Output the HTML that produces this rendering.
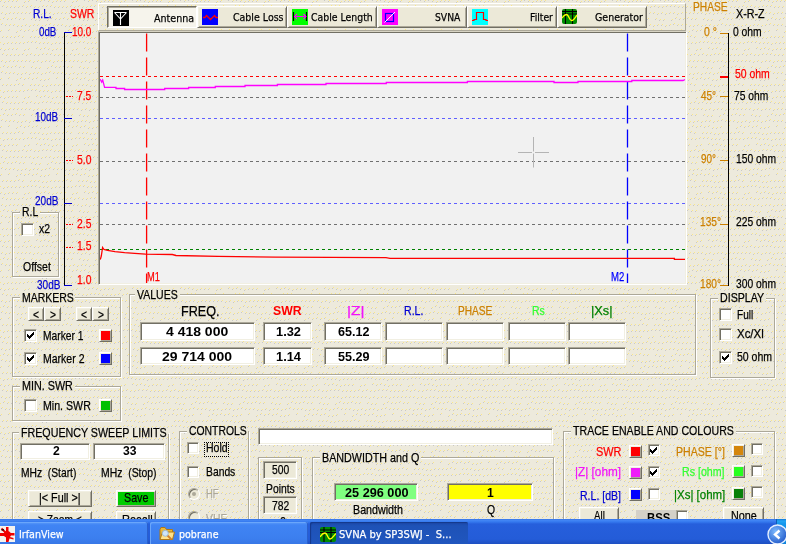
<!DOCTYPE html><html><head><meta charset="utf-8"><title>SVNA by SP3SWJ</title><style>
html,body{margin:0;padding:0}body{width:786px;height:544px;overflow:hidden;position:relative;background:#ECE9D8;font-family:"Liberation Sans",sans-serif}
#r{position:absolute;left:0;top:0;width:786px;height:544px;overflow:hidden;will-change:transform}
#r div,#r svg,#r span{position:absolute}
#r span{white-space:pre;line-height:1;transform-origin:0 0;-webkit-text-stroke:0.25px}
</style></head><body><div id="r">
<svg style="left:0;top:0" width="786" height="544" viewBox="0 0 786 544" shape-rendering="crispEdges"><defs><pattern id="dp" width="48" height="48" patternUnits="userSpaceOnUse"><rect width="48" height="48" fill="#EDEADC"/><path fill="#FBE78A" d="M1 0h1v1h-1zM5 1h1v1h-1zM9 0h1v1h-1zM13 0h1v1h-1zM17 0h1v1h-1zM25 1h1v1h-1zM29 0h1v1h-1zM37 47h1v1h-1zM41 0h1v1h-1zM45 47h1v1h-1zM3 5h1v1h-1zM7 6h1v1h-1zM11 6h1v1h-1zM15 6h1v1h-1zM19 6h1v1h-1zM23 5h1v1h-1zM27 6h1v1h-1zM31 5h1v1h-1zM35 6h1v1h-1zM39 6h1v1h-1zM43 5h1v1h-1zM47 5h1v1h-1zM2 12h1v1h-1zM6 13h1v1h-1zM10 12h1v1h-1zM14 12h1v1h-1zM18 12h1v1h-1zM22 12h1v1h-1zM26 12h1v1h-1zM30 12h1v1h-1zM34 13h1v1h-1zM38 12h1v1h-1zM42 13h1v1h-1zM46 12h1v1h-1zM4 17h1v1h-1zM8 18h1v1h-1zM12 18h1v1h-1zM16 17h1v1h-1zM20 18h1v1h-1zM24 18h1v1h-1zM32 18h1v1h-1zM36 19h1v1h-1zM40 19h1v1h-1zM0 19h1v1h-1zM2 23h1v1h-1zM6 24h1v1h-1zM10 24h1v1h-1zM14 24h1v1h-1zM18 25h1v1h-1zM22 25h1v1h-1zM26 24h1v1h-1zM30 25h1v1h-1zM34 24h1v1h-1zM38 24h1v1h-1zM42 25h1v1h-1zM46 24h1v1h-1zM1 30h1v1h-1zM9 29h1v1h-1zM17 31h1v1h-1zM21 29h1v1h-1zM25 30h1v1h-1zM29 29h1v1h-1zM33 30h1v1h-1zM37 29h1v1h-1zM41 31h1v1h-1zM45 31h1v1h-1zM3 36h1v1h-1zM7 36h1v1h-1zM11 36h1v1h-1zM15 36h1v1h-1zM19 35h1v1h-1zM23 36h1v1h-1zM31 36h1v1h-1zM35 36h1v1h-1zM39 36h1v1h-1zM43 37h1v1h-1zM47 37h1v1h-1zM4 43h1v1h-1zM8 42h1v1h-1zM12 42h1v1h-1zM16 42h1v1h-1zM20 42h1v1h-1zM24 42h1v1h-1zM28 41h1v1h-1zM32 41h1v1h-1zM36 41h1v1h-1zM40 42h1v1h-1zM44 42h1v1h-1zM0 42h1v1h-1z"/><path fill="#C9C8C8" d="M0 1h1v1h-1zM4 2h1v1h-1zM8 1h1v1h-1zM12 1h1v1h-1zM16 1h1v1h-1zM24 2h1v1h-1zM28 1h1v1h-1zM36 0h1v1h-1zM40 1h1v1h-1zM44 0h1v1h-1zM2 6h1v1h-1zM6 7h1v1h-1zM10 7h1v1h-1zM14 7h1v1h-1zM18 7h1v1h-1zM22 6h1v1h-1zM26 7h1v1h-1zM30 6h1v1h-1zM34 7h1v1h-1zM38 7h1v1h-1zM42 6h1v1h-1zM46 6h1v1h-1zM1 13h1v1h-1zM5 14h1v1h-1zM9 13h1v1h-1zM13 13h1v1h-1zM17 13h1v1h-1zM21 13h1v1h-1zM25 13h1v1h-1zM29 13h1v1h-1zM33 14h1v1h-1zM37 13h1v1h-1zM41 14h1v1h-1zM45 13h1v1h-1zM3 18h1v1h-1zM7 19h1v1h-1zM11 19h1v1h-1zM15 18h1v1h-1zM19 19h1v1h-1zM23 19h1v1h-1zM31 19h1v1h-1zM35 20h1v1h-1zM39 20h1v1h-1zM47 20h1v1h-1zM1 24h1v1h-1zM5 25h1v1h-1zM9 25h1v1h-1zM13 25h1v1h-1zM17 26h1v1h-1zM21 26h1v1h-1zM25 25h1v1h-1zM29 26h1v1h-1zM33 25h1v1h-1zM37 25h1v1h-1zM41 26h1v1h-1zM45 25h1v1h-1zM0 31h1v1h-1zM8 30h1v1h-1zM16 32h1v1h-1zM20 30h1v1h-1zM24 31h1v1h-1zM28 30h1v1h-1zM32 31h1v1h-1zM36 30h1v1h-1zM40 32h1v1h-1zM44 32h1v1h-1zM2 37h1v1h-1zM6 37h1v1h-1zM10 37h1v1h-1zM14 37h1v1h-1zM18 36h1v1h-1zM22 37h1v1h-1zM30 37h1v1h-1zM34 37h1v1h-1zM38 37h1v1h-1zM42 38h1v1h-1zM46 38h1v1h-1zM3 44h1v1h-1zM7 43h1v1h-1zM11 43h1v1h-1zM15 43h1v1h-1zM19 43h1v1h-1zM23 43h1v1h-1zM27 42h1v1h-1zM31 42h1v1h-1zM35 42h1v1h-1zM39 43h1v1h-1zM43 43h1v1h-1zM47 43h1v1h-1z"/></pattern></defs><rect width="786" height="544" fill="url(#dp)"/></svg>
<div style="left:98px;top:3px;width:588px;height:28px;box-sizing:border-box;border:1px solid;border-color:#FFFFFF #ACA899 #ACA899 #FFFFFF"></div>
<div style="left:107px;top:6px;width:90px;height:22px;box-sizing:border-box;background:#F6F4EC;border:1px solid;border-color:#716F64 #FFFFFF #FFFFFF #716F64;box-shadow:inset 1px 1px 0 #ACA899"></div>
<div style="left:197px;top:6px;width:90px;height:22px;box-sizing:border-box;background:#ECE9D8;border:1px solid;border-color:#FFFFFF #716F64 #716F64 #FFFFFF;box-shadow:inset 1px 1px 0 #F1EFE2,inset -1px -1px 0 #ACA899"></div>
<div style="left:287px;top:6px;width:90px;height:22px;box-sizing:border-box;background:#ECE9D8;border:1px solid;border-color:#FFFFFF #716F64 #716F64 #FFFFFF;box-shadow:inset 1px 1px 0 #F1EFE2,inset -1px -1px 0 #ACA899"></div>
<div style="left:377px;top:6px;width:90px;height:22px;box-sizing:border-box;background:#ECE9D8;border:1px solid;border-color:#FFFFFF #716F64 #716F64 #FFFFFF;box-shadow:inset 1px 1px 0 #F1EFE2,inset -1px -1px 0 #ACA899"></div>
<div style="left:467px;top:6px;width:90px;height:22px;box-sizing:border-box;background:#ECE9D8;border:1px solid;border-color:#FFFFFF #716F64 #716F64 #FFFFFF;box-shadow:inset 1px 1px 0 #F1EFE2,inset -1px -1px 0 #ACA899"></div>
<div style="left:557px;top:6px;width:90px;height:22px;box-sizing:border-box;background:#ECE9D8;border:1px solid;border-color:#FFFFFF #716F64 #716F64 #FFFFFF;box-shadow:inset 1px 1px 0 #F1EFE2,inset -1px -1px 0 #ACA899"></div>
<svg style="left:113px;top:10px" width="16" height="16" viewBox="0 0 16 16" ><rect width="16" height="16" fill="#000"/><path d="M1.5 2.5H13.5M7.5 2.5V15M1.5 2.5L7.5 9L13.5 2.5" stroke="#fff" stroke-width="1.1" fill="none"/></svg>
<svg style="left:202px;top:9px" width="16" height="16" viewBox="0 0 16 16" ><rect width="16" height="16" fill="#0000FF"/><path d="M1 8.5H3L4.5 6.5L8.5 10.5L12.5 6.5L14 8.5H16" stroke="#FF0000" stroke-width="1.3" fill="none"/></svg>
<svg style="left:292px;top:9px" width="16" height="16" viewBox="0 0 16 16" ><rect width="16" height="16" fill="#00FF00"/><path d="M1.5 3V12M14.5 3V12" stroke="#000" stroke-width="1.2"/><path d="M2.5 7.5H14M5 5L2.5 7.5L5 10M11.5 5L14 7.5L11.5 10" stroke="#FF00FF" stroke-width="1.1" fill="none"/></svg>
<svg style="left:382px;top:9px" width="16" height="16" viewBox="0 0 16 16" ><rect width="16" height="16" fill="#FF00FF"/><rect x="3.5" y="4.5" width="8" height="8" fill="none" stroke="#0000FF" stroke-width="1.2"/><path d="M2.5 13.5L13 3" stroke="#fff" stroke-width="1"/></svg>
<svg style="left:472px;top:9px" width="16" height="16" viewBox="0 0 16 16" ><rect width="16" height="16" fill="#00FFFF"/><path d="M0 11.5H2V10.5H4.5V3.5H11.5V10.5H14V11.5H16" stroke="#FF0000" stroke-width="1.2" fill="none"/></svg>
<svg style="left:562px;top:9px" width="16" height="16" viewBox="0 0 16 16" ><rect width="15" height="15" rx="2" fill="#008C00"/><path d="M3.5 0V15M10.5 0V15M0 2.5H15M0 5H15" stroke="#000" stroke-width="1.1"/><path d="M0 9C1.5 7 2.5 5.5 4.5 5.5C7 5.5 7 11.5 9.5 11.5C12 11.5 13.5 8 15 6" stroke="#FFFF00" stroke-width="1.3" fill="none"/></svg>
<div style="left:98px;top:31px;width:589px;height:254px;box-sizing:border-box;background:#F1F1F1;border:1px solid;border-color:#D8D4C4 #FFFFFF #FFFFFF #ACA899;box-shadow:inset 1px 1px 0 #716F64,inset -1px -1px 0 #F1EFE2"></div>
<svg style="left:100px;top:33px" width="585" height="250" viewBox="0 0 585 250" ><line x1="0" y1="43.5" x2="585" y2="43.5" stroke="#FF0000" stroke-width="1" stroke-dasharray="3 3"/><line x1="0" y1="64.5" x2="585" y2="64.5" stroke="#707070" stroke-width="1" stroke-dasharray="3 3"/><line x1="0" y1="85.5" x2="585" y2="85.5" stroke="#6060FF" stroke-width="1" stroke-dasharray="3 3"/><line x1="0" y1="128.5" x2="585" y2="128.5" stroke="#707070" stroke-width="1" stroke-dasharray="3 3"/><line x1="0" y1="170.5" x2="585" y2="170.5" stroke="#6060FF" stroke-width="1" stroke-dasharray="3 3"/><line x1="0" y1="191.5" x2="585" y2="191.5" stroke="#707070" stroke-width="1" stroke-dasharray="3 3"/><line x1="0" y1="216.5" x2="585" y2="216.5" stroke="#008000" stroke-width="1" stroke-dasharray="3 3"/><line x1="46.599999999999994" y1="0.5" x2="46.599999999999994" y2="250" stroke="#FF0000" stroke-width="1.3" stroke-dasharray="18 6"/><line x1="527.5" y1="0.5" x2="527.5" y2="250" stroke="#0000FF" stroke-width="1.3" stroke-dasharray="18 6"/><polyline fill="none" stroke="#FF00FF" stroke-width="1.3" points="0.0,46.0 1.7,49.0 2.7,47.0 4.6,54.3 16.0,54.3 16.0,55.5 24.6,55.5 24.6,56.5 64.7,56.5 64.7,55.5 88.6,55.5 88.6,54.5 115.3,54.5 115.3,53.5 145.0,53.5 145.0,52.5 177.4,52.5 177.4,51.5 226.0,51.5 226.0,50.5 286.3,50.5 286.3,49.5 367.4,49.5 367.4,48.5 454.0,48.5 454.0,49.5 478.0,49.5 478.0,48.5 531.8,48.5 531.8,47.5 583.0,47.5 585.0,46.5"/><polyline fill="none" stroke="#FF0000" stroke-width="1.3" points="0.3,226.5 1.3,223.0 2.6,214.5 4.0,216.5 7.5,217.3 15.0,218.6 24.6,219.6 34.6,220.4 45.6,221.1 72.3,221.5 76.0,222.5 118.0,223.4 175.4,224.2 286.0,224.6 290.0,225.3 574.4,225.3 574.4,226.3 585.0,226.3"/><path d="M433.5 104V118.5M433.5 120.5V134.5M418 119.5H432M435 119.5H449" stroke="#B4B4B4" stroke-width="1"/></svg>
<div style="left:64px;top:32px;width:1.35px;height:254px;background:#000"></div>
<div style="left:64px;top:32px;width:8px;height:1.4px;background:#0000D0"></div>
<div style="left:64px;top:118px;width:8px;height:1.4px;background:#0000D0"></div>
<div style="left:64px;top:203px;width:8px;height:1.4px;background:#0000D0"></div>
<div style="left:64px;top:285px;width:8px;height:1.4px;background:#0000D0"></div>
<div style="left:65.5px;top:96.0px;width:7.5px;height:1px;background:repeating-linear-gradient(90deg,#FF0000 0 2px,transparent 2px 3px)"></div>
<div style="left:65.5px;top:160.0px;width:7.5px;height:1px;background:repeating-linear-gradient(90deg,#FF0000 0 2px,transparent 2px 3px)"></div>
<div style="left:65.5px;top:223.5px;width:7.5px;height:1px;background:repeating-linear-gradient(90deg,#FF0000 0 2px,transparent 2px 3px)"></div>
<div style="left:65.5px;top:247.0px;width:7.5px;height:1px;background:repeating-linear-gradient(90deg,#FF0000 0 2px,transparent 2px 3px)"></div>
<div style="left:728px;top:33px;width:1.35px;height:253px;background:#000"></div>
<div style="left:720px;top:33px;width:8px;height:1.4px;background:#CC8000"></div>
<div style="left:720px;top:96px;width:8px;height:1.4px;background:#CC8000"></div>
<div style="left:720px;top:160px;width:8px;height:1.4px;background:#CC8000"></div>
<div style="left:720px;top:223.5px;width:8px;height:1.4px;background:#CC8000"></div>
<div style="left:720px;top:285px;width:8px;height:1.4px;background:#CC8000"></div>
<div style="left:720px;top:76.3px;width:8px;height:1.4px;background:#FF0000"></div>
<div style="left:13px;top:213px;width:47px;height:65px;border:1px solid #FFFFFF;box-sizing:border-box"></div>
<div style="left:12px;top:212px;width:47px;height:65px;border:1px solid #ACA899;box-sizing:border-box"></div>
<div style="left:19.5px;top:212px;width:20.200000000000003px;height:2px;background:#ECE9D8"></div>
<div style="left:21px;top:223px;width:13px;height:13px;box-sizing:border-box;background:#fff;border:1px solid;border-color:#ACA899 #FFFFFF #FFFFFF #ACA899;box-shadow:inset 1px 1px 0 #716F64,inset -1px -1px 0 #F1EFE2"></div>
<div style="left:13px;top:298px;width:109px;height:80px;border:1px solid #FFFFFF;box-sizing:border-box"></div>
<div style="left:12px;top:297px;width:109px;height:80px;border:1px solid #ACA899;box-sizing:border-box"></div>
<div style="left:19.7px;top:297px;width:55.8px;height:2px;background:#ECE9D8"></div>
<div style="left:28px;top:307px;width:16px;height:14px;box-sizing:border-box;background:#ECE9D8;border:1px solid;border-color:#FFFFFF #716F64 #716F64 #FFFFFF;box-shadow:inset 1px 1px 0 #F1EFE2,inset -1px -1px 0 #ACA899"></div>
<div style="left:44px;top:307px;width:17px;height:14px;box-sizing:border-box;background:#ECE9D8;border:1px solid;border-color:#FFFFFF #716F64 #716F64 #FFFFFF;box-shadow:inset 1px 1px 0 #F1EFE2,inset -1px -1px 0 #ACA899"></div>
<div style="left:76px;top:307px;width:16px;height:14px;box-sizing:border-box;background:#ECE9D8;border:1px solid;border-color:#FFFFFF #716F64 #716F64 #FFFFFF;box-shadow:inset 1px 1px 0 #F1EFE2,inset -1px -1px 0 #ACA899"></div>
<div style="left:92px;top:307px;width:17px;height:14px;box-sizing:border-box;background:#ECE9D8;border:1px solid;border-color:#FFFFFF #716F64 #716F64 #FFFFFF;box-shadow:inset 1px 1px 0 #F1EFE2,inset -1px -1px 0 #ACA899"></div>
<div style="left:24px;top:329px;width:13px;height:13px;box-sizing:border-box;background:#fff;border:1px solid;border-color:#ACA899 #FFFFFF #FFFFFF #ACA899;box-shadow:inset 1px 1px 0 #716F64,inset -1px -1px 0 #F1EFE2"></div>
<svg style="left:27px;top:332px" width="7" height="7" viewBox="0 0 7 7" shape-rendering="crispEdges"><rect x="0" y="2" width="1" height="3"/><rect x="1" y="3" width="1" height="3"/><rect x="2" y="4" width="1" height="3"/><rect x="3" y="3" width="1" height="3"/><rect x="4" y="2" width="1" height="3"/><rect x="5" y="1" width="1" height="3"/><rect x="6" y="0" width="1" height="3"/></svg>
<div style="left:24px;top:352px;width:13px;height:13px;box-sizing:border-box;background:#fff;border:1px solid;border-color:#ACA899 #FFFFFF #FFFFFF #ACA899;box-shadow:inset 1px 1px 0 #716F64,inset -1px -1px 0 #F1EFE2"></div>
<svg style="left:27px;top:355px" width="7" height="7" viewBox="0 0 7 7" shape-rendering="crispEdges"><rect x="0" y="2" width="1" height="3"/><rect x="1" y="3" width="1" height="3"/><rect x="2" y="4" width="1" height="3"/><rect x="3" y="3" width="1" height="3"/><rect x="4" y="2" width="1" height="3"/><rect x="5" y="1" width="1" height="3"/><rect x="6" y="0" width="1" height="3"/></svg>
<div style="left:99px;top:329px;width:13px;height:13px;box-sizing:border-box;background:#ECE9D8;border:1px solid;border-color:#FFFFFF #716F64 #716F64 #FFFFFF;box-shadow:inset 1px 1px 0 #F1EFE2,inset -1px -1px 0 #ACA899"></div>
<div style="left:101px;top:331px;width:9px;height:9px;background:#FF0000"></div>
<div style="left:99px;top:352px;width:13px;height:13px;box-sizing:border-box;background:#ECE9D8;border:1px solid;border-color:#FFFFFF #716F64 #716F64 #FFFFFF;box-shadow:inset 1px 1px 0 #F1EFE2,inset -1px -1px 0 #ACA899"></div>
<div style="left:101px;top:354px;width:9px;height:9px;background:#0000FF"></div>
<div style="left:130px;top:295px;width:567px;height:81px;border:1px solid #FFFFFF;box-sizing:border-box"></div>
<div style="left:129px;top:294px;width:567px;height:81px;border:1px solid #ACA899;box-sizing:border-box"></div>
<div style="left:135.3px;top:294px;width:44.69999999999999px;height:2px;background:#ECE9D8"></div>
<div style="left:140px;top:322px;width:115px;height:19px;box-sizing:border-box;background:#fff;border:1px solid;border-color:#ACA899 #FFFFFF #FFFFFF #ACA899;box-shadow:inset 1px 1px 0 #716F64,inset -1px -1px 0 #F1EFE2"></div>
<div style="left:140px;top:347px;width:115px;height:18px;box-sizing:border-box;background:#fff;border:1px solid;border-color:#ACA899 #FFFFFF #FFFFFF #ACA899;box-shadow:inset 1px 1px 0 #716F64,inset -1px -1px 0 #F1EFE2"></div>
<div style="left:263px;top:322px;width:49px;height:19px;box-sizing:border-box;background:#fff;border:1px solid;border-color:#ACA899 #FFFFFF #FFFFFF #ACA899;box-shadow:inset 1px 1px 0 #716F64,inset -1px -1px 0 #F1EFE2"></div>
<div style="left:263px;top:347px;width:49px;height:18px;box-sizing:border-box;background:#fff;border:1px solid;border-color:#ACA899 #FFFFFF #FFFFFF #ACA899;box-shadow:inset 1px 1px 0 #716F64,inset -1px -1px 0 #F1EFE2"></div>
<div style="left:324px;top:322px;width:58px;height:19px;box-sizing:border-box;background:#fff;border:1px solid;border-color:#ACA899 #FFFFFF #FFFFFF #ACA899;box-shadow:inset 1px 1px 0 #716F64,inset -1px -1px 0 #F1EFE2"></div>
<div style="left:324px;top:347px;width:58px;height:18px;box-sizing:border-box;background:#fff;border:1px solid;border-color:#ACA899 #FFFFFF #FFFFFF #ACA899;box-shadow:inset 1px 1px 0 #716F64,inset -1px -1px 0 #F1EFE2"></div>
<div style="left:385px;top:322px;width:58px;height:19px;box-sizing:border-box;background:#fff;border:1px solid;border-color:#ACA899 #FFFFFF #FFFFFF #ACA899;box-shadow:inset 1px 1px 0 #716F64,inset -1px -1px 0 #F1EFE2"></div>
<div style="left:385px;top:347px;width:58px;height:18px;box-sizing:border-box;background:#fff;border:1px solid;border-color:#ACA899 #FFFFFF #FFFFFF #ACA899;box-shadow:inset 1px 1px 0 #716F64,inset -1px -1px 0 #F1EFE2"></div>
<div style="left:446px;top:322px;width:58px;height:19px;box-sizing:border-box;background:#fff;border:1px solid;border-color:#ACA899 #FFFFFF #FFFFFF #ACA899;box-shadow:inset 1px 1px 0 #716F64,inset -1px -1px 0 #F1EFE2"></div>
<div style="left:446px;top:347px;width:58px;height:18px;box-sizing:border-box;background:#fff;border:1px solid;border-color:#ACA899 #FFFFFF #FFFFFF #ACA899;box-shadow:inset 1px 1px 0 #716F64,inset -1px -1px 0 #F1EFE2"></div>
<div style="left:508px;top:322px;width:58px;height:19px;box-sizing:border-box;background:#fff;border:1px solid;border-color:#ACA899 #FFFFFF #FFFFFF #ACA899;box-shadow:inset 1px 1px 0 #716F64,inset -1px -1px 0 #F1EFE2"></div>
<div style="left:508px;top:347px;width:58px;height:18px;box-sizing:border-box;background:#fff;border:1px solid;border-color:#ACA899 #FFFFFF #FFFFFF #ACA899;box-shadow:inset 1px 1px 0 #716F64,inset -1px -1px 0 #F1EFE2"></div>
<div style="left:568px;top:322px;width:58px;height:19px;box-sizing:border-box;background:#fff;border:1px solid;border-color:#ACA899 #FFFFFF #FFFFFF #ACA899;box-shadow:inset 1px 1px 0 #716F64,inset -1px -1px 0 #F1EFE2"></div>
<div style="left:568px;top:347px;width:58px;height:18px;box-sizing:border-box;background:#fff;border:1px solid;border-color:#ACA899 #FFFFFF #FFFFFF #ACA899;box-shadow:inset 1px 1px 0 #716F64,inset -1px -1px 0 #F1EFE2"></div>
<div style="left:711px;top:299px;width:65px;height:80px;border:1px solid #FFFFFF;box-sizing:border-box"></div>
<div style="left:710px;top:298px;width:65px;height:80px;border:1px solid #ACA899;box-sizing:border-box"></div>
<div style="left:717.5px;top:298px;width:48.10000000000002px;height:2px;background:#ECE9D8"></div>
<div style="left:719px;top:308px;width:13px;height:13px;box-sizing:border-box;background:#fff;border:1px solid;border-color:#ACA899 #FFFFFF #FFFFFF #ACA899;box-shadow:inset 1px 1px 0 #716F64,inset -1px -1px 0 #F1EFE2"></div>
<div style="left:719px;top:328px;width:13px;height:13px;box-sizing:border-box;background:#fff;border:1px solid;border-color:#ACA899 #FFFFFF #FFFFFF #ACA899;box-shadow:inset 1px 1px 0 #716F64,inset -1px -1px 0 #F1EFE2"></div>
<div style="left:719px;top:351px;width:13px;height:13px;box-sizing:border-box;background:#fff;border:1px solid;border-color:#ACA899 #FFFFFF #FFFFFF #ACA899;box-shadow:inset 1px 1px 0 #716F64,inset -1px -1px 0 #F1EFE2"></div>
<svg style="left:722px;top:354px" width="7" height="7" viewBox="0 0 7 7" shape-rendering="crispEdges"><rect x="0" y="2" width="1" height="3"/><rect x="1" y="3" width="1" height="3"/><rect x="2" y="4" width="1" height="3"/><rect x="3" y="3" width="1" height="3"/><rect x="4" y="2" width="1" height="3"/><rect x="5" y="1" width="1" height="3"/><rect x="6" y="0" width="1" height="3"/></svg>
<div style="left:13px;top:387px;width:109px;height:35px;border:1px solid #FFFFFF;box-sizing:border-box"></div>
<div style="left:12px;top:386px;width:109px;height:35px;border:1px solid #ACA899;box-sizing:border-box"></div>
<div style="left:19.7px;top:386px;width:54.89999999999999px;height:2px;background:#ECE9D8"></div>
<div style="left:24px;top:399px;width:13px;height:13px;box-sizing:border-box;background:#fff;border:1px solid;border-color:#ACA899 #FFFFFF #FFFFFF #ACA899;box-shadow:inset 1px 1px 0 #716F64,inset -1px -1px 0 #F1EFE2"></div>
<div style="left:99px;top:399px;width:13px;height:13px;box-sizing:border-box;background:#ECE9D8;border:1px solid;border-color:#FFFFFF #716F64 #716F64 #FFFFFF;box-shadow:inset 1px 1px 0 #F1EFE2,inset -1px -1px 0 #ACA899"></div>
<div style="left:101px;top:401px;width:9px;height:9px;background:#00C000"></div>
<div style="left:13px;top:433px;width:157px;height:128px;border:1px solid #FFFFFF;box-sizing:border-box"></div>
<div style="left:12px;top:432px;width:157px;height:128px;border:1px solid #ACA899;box-sizing:border-box"></div>
<div style="left:19px;top:432px;width:149.7px;height:2px;background:#ECE9D8"></div>
<div style="left:20px;top:443px;width:70px;height:17px;box-sizing:border-box;background:#fff;border:1px solid;border-color:#ACA899 #FFFFFF #FFFFFF #ACA899;box-shadow:inset 1px 1px 0 #716F64,inset -1px -1px 0 #F1EFE2"></div>
<div style="left:93px;top:443px;width:72px;height:17px;box-sizing:border-box;background:#fff;border:1px solid;border-color:#ACA899 #FFFFFF #FFFFFF #ACA899;box-shadow:inset 1px 1px 0 #716F64,inset -1px -1px 0 #F1EFE2"></div>
<div style="left:28px;top:490px;width:64px;height:17px;box-sizing:border-box;background:#ECE9D8;border:1px solid;border-color:#FFFFFF #716F64 #716F64 #FFFFFF;box-shadow:inset 1px 1px 0 #F1EFE2,inset -1px -1px 0 #ACA899"></div>
<div style="left:116px;top:490px;width:40px;height:17px;box-sizing:border-box;background:#00CC00;border:1px solid;border-color:#FFFFFF #716F64 #716F64 #FFFFFF;box-shadow:inset 1px 1px 0 #F1EFE2,inset -1px -1px 0 #ACA899"></div>
<div style="left:28px;top:511px;width:64px;height:17px;box-sizing:border-box;background:#ECE9D8;border:1px solid;border-color:#FFFFFF #716F64 #716F64 #FFFFFF;box-shadow:inset 1px 1px 0 #F1EFE2,inset -1px -1px 0 #ACA899"></div>
<div style="left:116px;top:511px;width:40px;height:17px;box-sizing:border-box;background:#ECE9D8;border:1px solid;border-color:#FFFFFF #716F64 #716F64 #FFFFFF;box-shadow:inset 1px 1px 0 #F1EFE2,inset -1px -1px 0 #ACA899"></div>
<div style="left:180px;top:432px;width:70px;height:129px;border:1px solid #FFFFFF;box-sizing:border-box"></div>
<div style="left:179px;top:431px;width:70px;height:129px;border:1px solid #ACA899;box-sizing:border-box"></div>
<div style="left:186.6px;top:431px;width:61.70000000000002px;height:2px;background:#ECE9D8"></div>
<div style="left:187px;top:442px;width:12px;height:12px;box-sizing:border-box;background:#fff;border:1px solid;border-color:#ACA899 #FFFFFF #FFFFFF #ACA899;box-shadow:inset 1px 1px 0 #716F64,inset -1px -1px 0 #F1EFE2"></div>
<div style="left:187px;top:466px;width:12px;height:12px;box-sizing:border-box;background:#fff;border:1px solid;border-color:#ACA899 #FFFFFF #FFFFFF #ACA899;box-shadow:inset 1px 1px 0 #716F64,inset -1px -1px 0 #F1EFE2"></div>
<div style="left:203.5px;top:441.5px;width:25px;height:15.5px;box-sizing:border-box;border:1px dotted #000"></div>
<div style="left:187.5px;top:488.2px;width:12px;height:12px;box-sizing:border-box;border-radius:50%;background:#ECE9D8;border:1px solid;border-color:#ACA899 #FFFFFF #FFFFFF #ACA899;box-shadow:inset 1px 1px 0 #716F64"></div>
<div style="left:187.5px;top:511px;width:12px;height:12px;box-sizing:border-box;border-radius:50%;background:#ECE9D8;border:1px solid;border-color:#ACA899 #FFFFFF #FFFFFF #ACA899;box-shadow:inset 1px 1px 0 #716F64"></div>
<div style="left:191.5px;top:492.2px;width:4px;height:4px;border-radius:50%;background:#ACA899"></div>
<div style="left:258px;top:428px;width:295px;height:17px;box-sizing:border-box;background:#fff;border:1px solid;border-color:#ACA899 #FFFFFF #FFFFFF #ACA899;box-shadow:inset 1px 1px 0 #716F64,inset -1px -1px 0 #F1EFE2"></div>
<div style="left:259px;top:458px;width:44px;height:103px;border:1px solid #FFFFFF;box-sizing:border-box"></div>
<div style="left:258px;top:457px;width:44px;height:103px;border:1px solid #ACA899;box-sizing:border-box"></div>
<div style="left:263px;top:461px;width:34px;height:18px;box-sizing:border-box;background:#ECE9D8;border:1px solid;border-color:#ACA899 #FFFFFF #FFFFFF #ACA899;box-shadow:inset 1px 1px 0 #716F64,inset -1px -1px 0 #F1EFE2"></div>
<div style="left:263px;top:496px;width:34px;height:18px;box-sizing:border-box;background:#ECE9D8;border:1px solid;border-color:#ACA899 #FFFFFF #FFFFFF #ACA899;box-shadow:inset 1px 1px 0 #716F64,inset -1px -1px 0 #F1EFE2"></div>
<div style="left:313px;top:458px;width:242px;height:103px;border:1px solid #FFFFFF;box-sizing:border-box"></div>
<div style="left:312px;top:457px;width:242px;height:103px;border:1px solid #ACA899;box-sizing:border-box"></div>
<div style="left:320px;top:457px;width:101.30000000000001px;height:2px;background:#ECE9D8"></div>
<div style="left:334px;top:483px;width:84px;height:18px;box-sizing:border-box;background:#80FF80;border:1px solid;border-color:#ACA899 #FFFFFF #FFFFFF #ACA899;box-shadow:inset 1px 1px 0 #716F64,inset -1px -1px 0 #F1EFE2"></div>
<div style="left:447px;top:483px;width:86px;height:18px;box-sizing:border-box;background:#FFFF00;border:1px solid;border-color:#ACA899 #FFFFFF #FFFFFF #ACA899;box-shadow:inset 1px 1px 0 #716F64,inset -1px -1px 0 #F1EFE2"></div>
<div style="left:564px;top:432px;width:212px;height:129px;border:1px solid #FFFFFF;box-sizing:border-box"></div>
<div style="left:563px;top:431px;width:212px;height:129px;border:1px solid #ACA899;box-sizing:border-box"></div>
<div style="left:570.7px;top:431px;width:164.89999999999998px;height:2px;background:#ECE9D8"></div>
<div style="left:629px;top:445px;width:13px;height:13px;box-sizing:border-box;background:#ECE9D8;border:1px solid;border-color:#FFFFFF #716F64 #716F64 #FFFFFF;box-shadow:inset 1px 1px 0 #F1EFE2,inset -1px -1px 0 #ACA899"></div>
<div style="left:631px;top:447px;width:9px;height:9px;background:#FF0000"></div>
<div style="left:648px;top:444px;width:12px;height:12px;box-sizing:border-box;background:#fff;border:1px solid;border-color:#ACA899 #FFFFFF #FFFFFF #ACA899;box-shadow:inset 1px 1px 0 #716F64,inset -1px -1px 0 #F1EFE2"></div>
<svg style="left:650px;top:447px" width="7" height="7" viewBox="0 0 7 7" shape-rendering="crispEdges"><rect x="0" y="2" width="1" height="3"/><rect x="1" y="3" width="1" height="3"/><rect x="2" y="4" width="1" height="3"/><rect x="3" y="3" width="1" height="3"/><rect x="4" y="2" width="1" height="3"/><rect x="5" y="1" width="1" height="3"/><rect x="6" y="0" width="1" height="3"/></svg>
<div style="left:732px;top:444px;width:13px;height:13px;box-sizing:border-box;background:#ECE9D8;border:1px solid;border-color:#FFFFFF #716F64 #716F64 #FFFFFF;box-shadow:inset 1px 1px 0 #F1EFE2,inset -1px -1px 0 #ACA899"></div>
<div style="left:734px;top:446px;width:9px;height:9px;background:#D4860C"></div>
<div style="left:751px;top:443px;width:12px;height:12px;box-sizing:border-box;background:#fff;border:1px solid;border-color:#ACA899 #FFFFFF #FFFFFF #ACA899;box-shadow:inset 1px 1px 0 #716F64,inset -1px -1px 0 #F1EFE2"></div>
<div style="left:629px;top:466px;width:13px;height:13px;box-sizing:border-box;background:#ECE9D8;border:1px solid;border-color:#FFFFFF #716F64 #716F64 #FFFFFF;box-shadow:inset 1px 1px 0 #F1EFE2,inset -1px -1px 0 #ACA899"></div>
<div style="left:631px;top:468px;width:9px;height:9px;background:#EE1CF8"></div>
<div style="left:648px;top:466px;width:12px;height:12px;box-sizing:border-box;background:#fff;border:1px solid;border-color:#ACA899 #FFFFFF #FFFFFF #ACA899;box-shadow:inset 1px 1px 0 #716F64,inset -1px -1px 0 #F1EFE2"></div>
<svg style="left:650px;top:469px" width="7" height="7" viewBox="0 0 7 7" shape-rendering="crispEdges"><rect x="0" y="2" width="1" height="3"/><rect x="1" y="3" width="1" height="3"/><rect x="2" y="4" width="1" height="3"/><rect x="3" y="3" width="1" height="3"/><rect x="4" y="2" width="1" height="3"/><rect x="5" y="1" width="1" height="3"/><rect x="6" y="0" width="1" height="3"/></svg>
<div style="left:732px;top:465px;width:13px;height:13px;box-sizing:border-box;background:#ECE9D8;border:1px solid;border-color:#FFFFFF #716F64 #716F64 #FFFFFF;box-shadow:inset 1px 1px 0 #F1EFE2,inset -1px -1px 0 #ACA899"></div>
<div style="left:734px;top:467px;width:9px;height:9px;background:#28FF20"></div>
<div style="left:751px;top:465px;width:12px;height:12px;box-sizing:border-box;background:#fff;border:1px solid;border-color:#ACA899 #FFFFFF #FFFFFF #ACA899;box-shadow:inset 1px 1px 0 #716F64,inset -1px -1px 0 #F1EFE2"></div>
<div style="left:629px;top:488px;width:13px;height:13px;box-sizing:border-box;background:#ECE9D8;border:1px solid;border-color:#FFFFFF #716F64 #716F64 #FFFFFF;box-shadow:inset 1px 1px 0 #F1EFE2,inset -1px -1px 0 #ACA899"></div>
<div style="left:631px;top:490px;width:9px;height:9px;background:#0000FF"></div>
<div style="left:648px;top:488px;width:12px;height:12px;box-sizing:border-box;background:#fff;border:1px solid;border-color:#ACA899 #FFFFFF #FFFFFF #ACA899;box-shadow:inset 1px 1px 0 #716F64,inset -1px -1px 0 #F1EFE2"></div>
<div style="left:732px;top:487px;width:13px;height:13px;box-sizing:border-box;background:#ECE9D8;border:1px solid;border-color:#FFFFFF #716F64 #716F64 #FFFFFF;box-shadow:inset 1px 1px 0 #F1EFE2,inset -1px -1px 0 #ACA899"></div>
<div style="left:734px;top:489px;width:9px;height:9px;background:#088008"></div>
<div style="left:751px;top:486px;width:12px;height:12px;box-sizing:border-box;background:#fff;border:1px solid;border-color:#ACA899 #FFFFFF #FFFFFF #ACA899;box-shadow:inset 1px 1px 0 #716F64,inset -1px -1px 0 #F1EFE2"></div>
<div style="left:579px;top:507px;width:40px;height:23px;box-sizing:border-box;background:#ECE9D8;border:1px solid;border-color:#FFFFFF #716F64 #716F64 #FFFFFF;box-shadow:inset 1px 1px 0 #F1EFE2,inset -1px -1px 0 #ACA899"></div>
<div style="left:636px;top:510px;width:41px;height:20px;background:#D4D0C8"></div>
<div style="left:676px;top:510px;width:12px;height:12px;box-sizing:border-box;background:#fff;border:1px solid;border-color:#ACA899 #FFFFFF #FFFFFF #ACA899;box-shadow:inset 1px 1px 0 #716F64,inset -1px -1px 0 #F1EFE2"></div>
<div style="left:723px;top:507px;width:41px;height:23px;box-sizing:border-box;background:#ECE9D8;border:1px solid;border-color:#FFFFFF #716F64 #716F64 #FFFFFF;box-shadow:inset 1px 1px 0 #F1EFE2,inset -1px -1px 0 #ACA899"></div>
<span id="t0" style="left:154.00px;top:13.00px;font-size:11px;color:#000;font-family:'DejaVu Sans','Liberation Sans',sans-serif;transform:scaleX(0.8689);">Antenna</span>
<span id="t1" style="left:232.80px;top:12.00px;font-size:11px;color:#000;font-family:'DejaVu Sans','Liberation Sans',sans-serif;transform:scaleX(0.8580);">Cable Loss</span>
<span id="t2" style="left:311.00px;top:12.00px;font-size:11px;color:#000;font-family:'DejaVu Sans','Liberation Sans',sans-serif;transform:scaleX(0.8504);">Cable Length</span>
<span id="t3" style="left:434.60px;top:12.00px;font-size:11px;color:#000;font-family:'DejaVu Sans','Liberation Sans',sans-serif;transform:scaleX(0.8392);">SVNA</span>
<span id="t4" style="left:530.00px;top:12.00px;font-size:11px;color:#000;font-family:'DejaVu Sans','Liberation Sans',sans-serif;transform:scaleX(0.8404);">Filter</span>
<span id="t5" style="left:595.00px;top:12.00px;font-size:11px;color:#000;font-family:'DejaVu Sans','Liberation Sans',sans-serif;transform:scaleX(0.8593);">Generator</span>
<span id="t6" style="left:146.70px;top:270.00px;font-size:13px;color:#FF0000;transform:scaleX(0.7142);">M1</span>
<span id="t7" style="left:611.40px;top:270.00px;font-size:13px;color:#0000FF;transform:scaleX(0.7363);">M2</span>
<span id="t8" style="left:32.90px;top:7.00px;font-size:13px;color:#0000D0;transform:scaleX(0.7843);">R.L.</span>
<span id="t9" style="left:69.90px;top:7.00px;font-size:13px;color:#FF0000;transform:scaleX(0.8041);">SWR</span>
<span id="t10" style="left:38.90px;top:25.00px;font-size:13px;color:#0000D0;transform:scaleX(0.7519);">0dB</span>
<span id="t11" style="left:72.00px;top:25.00px;font-size:13px;color:#FF0000;transform:scaleX(0.7664);">10.0</span>
<span id="t12" style="left:77.00px;top:89.00px;font-size:13px;color:#FF0000;transform:scaleX(0.7910);">7.5</span>
<span id="t13" style="left:34.70px;top:110.00px;font-size:13px;color:#0000D0;transform:scaleX(0.7605);">10dB</span>
<span id="t14" style="left:76.60px;top:153.00px;font-size:13px;color:#FF0000;transform:scaleX(0.7965);">5.0</span>
<span id="t15" style="left:35.00px;top:194.00px;font-size:13px;color:#0000D0;transform:scaleX(0.7704);">20dB</span>
<span id="t16" style="left:76.60px;top:217.00px;font-size:13px;color:#FF0000;transform:scaleX(0.7965);">2.5</span>
<span id="t17" style="left:76.60px;top:239.00px;font-size:13px;color:#FF0000;transform:scaleX(0.7965);">1.5</span>
<span id="t18" style="left:76.60px;top:273.00px;font-size:13px;color:#FF0000;transform:scaleX(0.7965);">1.0</span>
<span id="t19" style="left:36.60px;top:278.00px;font-size:13px;color:#0000D0;transform:scaleX(0.7704);">30dB</span>
<span id="t20" style="left:692.70px;top:0.00px;font-size:13px;color:#CC8000;transform:scaleX(0.7827);">PHASE</span>
<span id="t21" style="left:735.50px;top:7.00px;font-size:13px;color:#000;transform:scaleX(0.8278);">X-R-Z</span>
<span id="t22" style="left:704.40px;top:25.00px;font-size:13px;color:#CC8000;transform:scaleX(0.8039);">0 °</span>
<span id="t23" style="left:732.60px;top:25.00px;font-size:13px;color:#000;transform:scaleX(0.7941);">0 ohm</span>
<span id="t24" style="left:734.50px;top:67.00px;font-size:13px;color:#FF0000;transform:scaleX(0.8023);">50 ohm</span>
<span id="t25" style="left:701.00px;top:89.00px;font-size:13px;color:#CC8000;transform:scaleX(0.7625);">45°</span>
<span id="t26" style="left:734.00px;top:89.00px;font-size:13px;color:#000;transform:scaleX(0.7885);">75 ohm</span>
<span id="t27" style="left:700.70px;top:152.00px;font-size:13px;color:#CC8000;transform:scaleX(0.7625);">90°</span>
<span id="t28" style="left:736.00px;top:152.00px;font-size:13px;color:#000;transform:scaleX(0.7906);">150 ohm</span>
<span id="t29" style="left:700.00px;top:215.00px;font-size:13px;color:#CC8000;transform:scaleX(0.7809);">135°</span>
<span id="t30" style="left:736.00px;top:215.00px;font-size:13px;color:#000;transform:scaleX(0.7906);">225 ohm</span>
<span id="t31" style="left:700.00px;top:277.00px;font-size:13px;color:#CC8000;transform:scaleX(0.7809);">180°</span>
<span id="t32" style="left:736.00px;top:277.00px;font-size:13px;color:#000;transform:scaleX(0.7906);">300 ohm</span>
<span id="t33" style="left:21.50px;top:205.00px;font-size:13px;color:#000;transform:scaleX(0.8006);">R.L</span>
<span id="t34" style="left:38.60px;top:222.00px;font-size:13px;color:#000;transform:scaleX(0.8009);">x2</span>
<span id="t35" style="left:22.60px;top:260.00px;font-size:13px;color:#000;transform:scaleX(0.8069);">Offset</span>
<span id="t36" style="left:21.70px;top:291.00px;font-size:13px;color:#000;transform:scaleX(0.8056);">MARKERS</span>
<span id="t37" style="left:33.00px;top:308.00px;font-size:13px;color:#000;transform:scaleX(0.7901);">&lt;</span>
<span id="t38" style="left:49.50px;top:308.00px;font-size:13px;color:#000;transform:scaleX(0.7901);">&gt;</span>
<span id="t39" style="left:81.00px;top:308.00px;font-size:13px;color:#000;transform:scaleX(0.7901);">&lt;</span>
<span id="t40" style="left:97.50px;top:308.00px;font-size:13px;color:#000;transform:scaleX(0.7901);">&gt;</span>
<span id="t41" style="left:42.50px;top:329.00px;font-size:13px;color:#000;transform:scaleX(0.7895);">Marker 1</span>
<span id="t42" style="left:42.50px;top:352.00px;font-size:13px;color:#000;transform:scaleX(0.8090);">Marker 2</span>
<span id="t43" style="left:137.30px;top:288.00px;font-size:13px;color:#000;transform:scaleX(0.8084);">VALUES</span>
<span id="t44" style="left:180.50px;top:304.00px;font-size:14px;color:#000;transform:scaleX(0.8999);">FREQ.</span>
<span id="t45" style="left:273.40px;top:304.00px;font-size:13px;color:#FF0000;font-weight:bold;-webkit-text-stroke:0;transform:scaleX(0.9425);">SWR</span>
<span id="t46" style="left:346.50px;top:304.00px;font-size:13px;color:#F214FA;transform:scaleX(1.1902);">|Z|</span>
<span id="t47" style="left:404.00px;top:304.00px;font-size:13px;color:#0000D0;transform:scaleX(0.8136);">R.L.</span>
<span id="t48" style="left:457.70px;top:304.00px;font-size:13px;color:#CC8000;transform:scaleX(0.7782);">PHASE</span>
<span id="t49" style="left:531.60px;top:304.00px;font-size:13px;color:#33FF33;transform:scaleX(0.8055);">Rs</span>
<span id="t50" style="left:590.70px;top:304.00px;font-size:13px;color:#008000;transform:scaleX(0.9846);">|Xs|</span>
<span id="t51" style="left:165.80px;top:325.00px;font-size:13.5px;color:#000;font-weight:bold;-webkit-text-stroke:0;transform:scaleX(1.0356);">4 418 000</span>
<span id="t52" style="left:162.00px;top:350.00px;font-size:13.5px;color:#000;font-weight:bold;-webkit-text-stroke:0;transform:scaleX(1.0358);">29 714 000</span>
<span id="t53" style="left:275.70px;top:325.00px;font-size:13.5px;color:#000;font-weight:bold;-webkit-text-stroke:0;transform:scaleX(0.9512);">1.32</span>
<span id="t54" style="left:275.70px;top:350.00px;font-size:13.5px;color:#000;font-weight:bold;-webkit-text-stroke:0;transform:scaleX(0.9512);">1.14</span>
<span id="t55" style="left:337.70px;top:325.00px;font-size:13.5px;color:#000;font-weight:bold;-webkit-text-stroke:0;transform:scaleX(0.9320);">65.12</span>
<span id="t56" style="left:337.70px;top:350.00px;font-size:13.5px;color:#000;font-weight:bold;-webkit-text-stroke:0;transform:scaleX(0.9320);">55.29</span>
<span id="t57" style="left:719.50px;top:291.00px;font-size:13px;color:#000;transform:scaleX(0.8174);">DISPLAY</span>
<span id="t58" style="left:737.30px;top:308.00px;font-size:13px;color:#000;transform:scaleX(0.7732);">Full</span>
<span id="t59" style="left:737.30px;top:327.00px;font-size:13px;color:#000;transform:scaleX(0.8799);">Xc/Xl</span>
<span id="t60" style="left:737.30px;top:350.00px;font-size:13px;color:#000;transform:scaleX(0.8092);">50 ohm</span>
<span id="t61" style="left:21.70px;top:379.00px;font-size:13px;color:#000;transform:scaleX(0.8291);">MIN. SWR</span>
<span id="t62" style="left:42.60px;top:399.00px;font-size:13px;color:#000;transform:scaleX(0.8171);">Min. SWR</span>
<span id="t63" style="left:21.00px;top:426.00px;font-size:13px;color:#000;transform:scaleX(0.8221);">FREQUENCY SWEEP LIMITS</span>
<span id="t64" style="left:52.67px;top:444.00px;font-size:13.5px;color:#000;font-weight:bold;-webkit-text-stroke:0;transform:scaleX(0.9000);">2</span>
<span id="t65" style="left:122.99px;top:444.00px;font-size:13.5px;color:#000;font-weight:bold;-webkit-text-stroke:0;transform:scaleX(0.9000);">33</span>
<span id="t66" style="left:20.90px;top:466.00px;font-size:13px;color:#000;transform:scaleX(0.7907);">MHz  (Start)</span>
<span id="t67" style="left:101.00px;top:466.00px;font-size:13px;color:#000;transform:scaleX(0.8004);">MHz  (Stop)</span>
<span id="t68" style="left:39.40px;top:491.00px;font-size:13px;color:#000;transform:scaleX(0.8282);">|&lt; Full &gt;|</span>
<span id="t69" style="left:123.90px;top:491.00px;font-size:13px;color:#000;transform:scaleX(0.8232);">Save</span>
<span id="t70" style="left:37.70px;top:513.00px;font-size:13px;color:#000;transform:scaleX(0.7854);">&gt; Zoom &lt;</span>
<span id="t71" style="left:122.00px;top:513.00px;font-size:13px;color:#000;transform:scaleX(0.8498);">Recall</span>
<span id="t72" style="left:188.60px;top:424.00px;font-size:13px;color:#000;transform:scaleX(0.7988);">CONTROLS</span>
<span id="t73" style="left:205.60px;top:441.00px;font-size:13px;color:#000;transform:scaleX(0.8112);">Hold</span>
<span id="t74" style="left:205.60px;top:465.00px;font-size:13px;color:#000;transform:scaleX(0.7946);">Bands</span>
<span id="t75" style="left:205.60px;top:487.00px;font-size:13px;color:#ACA899;text-shadow:1px 1px 0 #fff;transform:scaleX(0.7323);">HF</span>
<span id="t76" style="left:205.60px;top:512.00px;font-size:13px;color:#ACA899;text-shadow:1px 1px 0 #fff;transform:scaleX(0.8038);">VHF</span>
<span id="t77" style="left:271.80px;top:463.00px;font-size:13px;color:#000;transform:scaleX(0.7925);">500</span>
<span id="t78" style="left:266.00px;top:482.00px;font-size:13px;color:#000;transform:scaleX(0.7941);">Points</span>
<span id="t79" style="left:271.80px;top:499.00px;font-size:13px;color:#000;transform:scaleX(0.7925);">782</span>
<span id="t80" style="left:280.00px;top:515.00px;font-size:13px;color:#000;transform:scaleX(0.8294);">0</span>
<span id="t81" style="left:322.00px;top:451.00px;font-size:13px;color:#000;transform:scaleX(0.8263);">BANDWIDTH and Q</span>
<span id="t82" style="left:344.50px;top:486.00px;font-size:13.5px;color:#000;font-weight:bold;-webkit-text-stroke:0;transform:scaleX(0.9397);">25 296 000</span>
<span id="t83" style="left:486.82px;top:486.00px;font-size:13.5px;color:#000;font-weight:bold;-webkit-text-stroke:0;transform:scaleX(0.9000);">1</span>
<span id="t84" style="left:352.70px;top:503.00px;font-size:13px;color:#000;transform:scaleX(0.8218);">Bandwidth</span>
<span id="t85" style="left:487.25px;top:503.00px;font-size:13px;color:#000;transform:scaleX(0.8000);">Q</span>
<span id="t86" style="left:572.70px;top:424.00px;font-size:13px;color:#000;transform:scaleX(0.8158);">TRACE ENABLE AND COLOURS</span>
<span id="t87" style="left:595.50px;top:445.00px;font-size:13px;color:#FF0000;transform:scaleX(0.8404);">SWR</span>
<span id="t88" style="left:676.00px;top:445.00px;font-size:13px;color:#CC8000;transform:scaleX(0.8135);">PHASE [°]</span>
<span id="t89" style="left:575.00px;top:465.00px;font-size:13px;color:#F214FA;transform:scaleX(0.9050);">|Z| [ohm]</span>
<span id="t90" style="left:682.40px;top:465.00px;font-size:13px;color:#33FF33;transform:scaleX(0.8171);">Rs [ohm]</span>
<span id="t91" style="left:580.00px;top:489.00px;font-size:13px;color:#0000D0;transform:scaleX(0.8106);">R.L. [dB]</span>
<span id="t92" style="left:673.60px;top:488.00px;font-size:13px;color:#008000;transform:scaleX(0.8835);">|Xs| [ohm]</span>
<span id="t93" style="left:593.50px;top:509.00px;font-size:13px;color:#000;transform:scaleX(0.7472);">All</span>
<span id="t94" style="left:646.70px;top:511.00px;font-size:13px;color:#000;font-weight:bold;-webkit-text-stroke:0;transform:scaleX(0.8715);">BSS</span>
<span id="t95" style="left:730.70px;top:509.00px;font-size:13px;color:#000;transform:scaleX(0.8302);">None</span>
<div style="left:0px;top:518.5px;width:786px;height:26px;background:linear-gradient(#2E6BE0 0,#4588F5 1px,#3478EE 3px,#265FDC 5px,#245CD8 20px,#1D4EC0 25.5px)"></div>
<div style="left:-3px;top:522px;width:151px;height:22px;border-radius:2px 2px 0 0;background:linear-gradient(#5C9CFA 0,#4084F4 3px,#3C7FEF 16px,#3877E6);box-shadow:inset -1px 0 0 #2A5FCC,inset 1px 1px 0 #6AA6FB"></div>
<div style="left:150px;top:522px;width:158px;height:22px;border-radius:2px 2px 0 0;background:linear-gradient(#5C9CFA 0,#4084F4 3px,#3C7FEF 16px,#3877E6);box-shadow:inset -1px 0 0 #2A5FCC,inset 1px 1px 0 #6AA6FB"></div>
<div style="left:310px;top:522px;width:158px;height:22px;border-radius:2px 2px 0 0;background:linear-gradient(#1B47A5,#1E52B7 4px,#2056BE);box-shadow:inset 1px 1px 1px #14388A"></div>
<div style="left:777px;top:518.5px;width:9px;height:26px;background:linear-gradient(#1078D8 0,#22A4F4 2px,#1496EC 5px,#118EE6 20px,#0F80D8)"></div>
<div style="left:776px;top:518.5px;width:1px;height:26px;background:#0E5CB8"></div>
<svg style="left:766px;top:523px" width="22" height="22" viewBox="0 0 22 22" ><defs><radialGradient id="cg" cx="0.4" cy="0.35" r="0.7"><stop offset="0" stop-color="#7DBBFF"/><stop offset="1" stop-color="#1F57C8"/></radialGradient></defs><circle cx="11.5" cy="11.5" r="9.5" fill="url(#cg)" stroke="#E4EEFF" stroke-width="1.4"/><path d="M13.5 7.5L9 11.5L13.5 15.5" stroke="#fff" stroke-width="2.4" fill="none"/></svg>
<svg style="left:0px;top:526px" width="15" height="16" viewBox="0 0 15 16" ><rect width="15" height="16" fill="#F4F2EE"/><path d="M0 7H6V1H8.5V6L11 7H14.5V9.5H11L10 11L13.5 12V13.5L9.5 12.5L8.5 16H6V10H0Z" fill="#F00000"/><circle cx="7.2" cy="8.3" r="3.3" fill="#F00000"/><path d="M1.5 2.5L5.5 6.5" stroke="#F00000" stroke-width="2"/><rect x="1.5" y="3" width="2.5" height="1.6" fill="#301010"/></svg>
<svg style="left:159px;top:526px" width="17" height="16" viewBox="0 0 17 16" ><path d="M1 3.5L2 1.5H6L7.5 3.5H13.5V13.5H1Z" fill="#E9B83C" stroke="#B07818" stroke-width="1"/><path d="M3.5 6H15.5L13.5 13.5H1Z" fill="#FFE28A" stroke="#B07818" stroke-width="1"/><path d="M8 9L12.5 13.5" stroke="#D08030" stroke-width="1.8"/><circle cx="6.3" cy="7.3" r="3" fill="#CFE6FA" stroke="#9AB4CC" stroke-width="0.9"/></svg>
<svg style="left:320px;top:527px" width="16" height="16" viewBox="0 0 16 16" ><rect width="16" height="15" rx="2" fill="#008C00"/><path d="M4 0V15M11 0V15M0 3H16M0 5.5H16" stroke="#000" stroke-width="1.1"/><path d="M0 10C1.5 7.5 3 6 5 6C7.5 6 7.5 12 10 12C12.5 12 14 8 16 6.5" stroke="#FFFF00" stroke-width="1.4" fill="none"/></svg>
<span id="t96" style="left:19.00px;top:529.00px;font-size:11px;color:#fff;font-family:'DejaVu Sans','Liberation Sans',sans-serif;transform:scaleX(0.8665);">IrfanView</span>
<span id="t97" style="left:178.70px;top:529.00px;font-size:11px;color:#fff;font-family:'DejaVu Sans','Liberation Sans',sans-serif;transform:scaleX(0.8643);">pobrane</span>
<span id="t98" style="left:339.40px;top:529.00px;font-size:11px;color:#fff;font-family:'DejaVu Sans','Liberation Sans',sans-serif;transform:scaleX(0.9051);">SVNA by SP3SWJ -  S...</span>
</div></body></html>
